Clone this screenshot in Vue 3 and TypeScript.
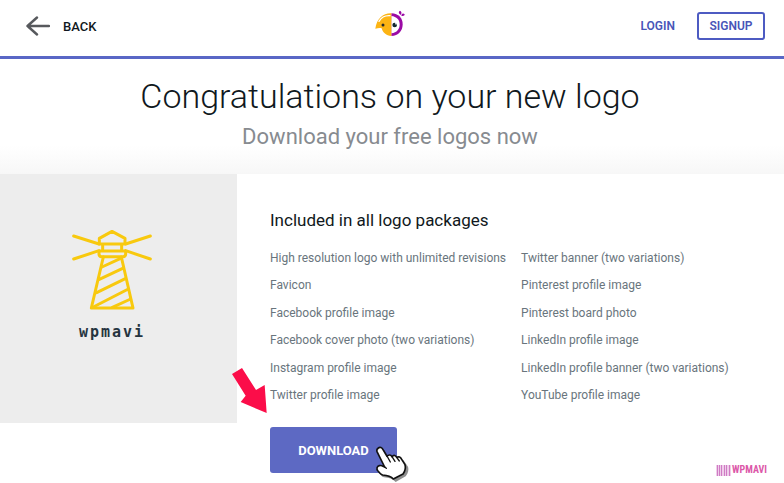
<script setup lang="ts">
const columns: string[][] = [
  [
    'High resolution logo with unlimited revisions',
    'Favicon',
    'Facebook profile image',
    'Facebook cover photo (two variations)',
    'Instagram profile image',
    'Twitter profile image',
  ],
  [
    'Twitter banner (two variations)',
    'Pinterest profile image',
    'Pinterest board photo',
    'LinkedIn profile image',
    'LinkedIn profile banner (two variations)',
    'YouTube profile image',
  ],
]
</script>

<template>
  <div class="page">
    <header class="topbar">
      <a class="back" href="#">
        <svg width="24" height="20" viewBox="0 0 24 20" fill="none" stroke="#57595d" stroke-width="2.400" stroke-linecap="round" stroke-linejoin="round" aria-hidden="true">
          <path d="M23 10H1.5M11 1.5L1.5 10L11 18.5" />
        </svg>
        <span>BACK</span>
      </a>
      <a class="brand" href="#" aria-label="Home">
        <svg width="32" height="32" viewBox="0 0 96 96" aria-hidden="true">
          <path d="M52 10C74 10 86 25 86 43C86 63 73 78 52 78Z" fill="#9b0aa5" />
          <path d="M52 18C68 20 77 29 77 43C77 58 69 68 52 70Z" fill="#fff" />
          <path d="M52 10C28 9 8 26 4 56C13 54 18 54 23 55C26 67 37 78 52 78Z" fill="#fcb414" />
          <path d="M15 34C22 22 34 16 48 17" fill="none" stroke="#fff" stroke-width="4" stroke-linecap="round" />
          <circle cx="27" cy="45" r="4.500" fill="#252a2b" />
          <circle cx="62" cy="45" r="7" fill="#13262f" />
          <circle cx="66" cy="41" r="2.500" fill="#fff" />
          <path d="M80 15C73 10 73 5 78 2C83 4 84 10 80 15ZM82 17C83 10 88 9 92 13C92 17 88 19 82 17Z" fill="#9b0aa5" />
        </svg>
      </a>
      <nav class="account">
        <a class="login" href="#">LOGIN</a>
        <button class="signup" type="button">SIGNUP</button>
      </nav>
    </header>

    <section class="hero">
      <h1>Congratulations on your new logo</h1>
      <p>Download your free logos now</p>
    </section>

    <main class="content">
      <aside class="preview">
        <svg width="80" height="80" viewBox="66 59 240 240" fill="none" stroke="#f8c90e" stroke-width="9" stroke-linecap="round" stroke-linejoin="round" aria-hidden="true">
          <path d="M148 101V84L186 63L225 84V101ZM158 102V121M215 102V121M147 122H227V131Q227 139 219 139H155Q147 139 147 131Z" />
          <path d="M160 140L124 293H249L214 140" />
          <path d="M156 170L212 144M148 207L218 174M140 247L226 205M130 290L235 236M187 291L242 266" />
          <path d="M71 77L147 101M71 146L147 121M301 77L227 101M301 146L227 121" />
        </svg>
        <span class="wordmark">wpmavi</span>
      </aside>

      <section class="details">
        <h2>Included in all logo packages</h2>
        <div class="lists">
          <ul v-for="(items, index) in columns" :key="index">
            <li v-for="item in items" :key="item">{{ item }}</li>
          </ul>
        </div>
        <div class="action">
          <button class="download" type="button">DOWNLOAD</button>
          <svg class="pointer-arrow" width="35" height="45" viewBox="35 25 105 135" aria-hidden="true">
            <path d="M65 25L35 43L76 108L61 127L139 160L133 76L107 91Z" fill="#fb0d49" />
          </svg>
          <svg class="hand" width="34" height="36" viewBox="0 0 102 108" aria-hidden="true">
            <path d="M12 8C17 4 23 7 26 13L38 31C43 28 49 28 53 33C58 29 64 31 67 36C73 32 79 36 83 42L95 59C99 72 92 83 88 88L58 105C49 96 39 92 23 91C16 90 14 84 9 79C3 71 6 64 13 62C20 60 25 63 30 65L9 19C7 14 8 11 12 8Z" fill="#333" opacity="0.55" transform="translate(4 3)" />
            <path d="M10 6C15 2 21 5 24 11L36 31C41 25 47 26 51 32C56 26 62 28 65 34C71 30 77 34 80 40L90 56C94 70 88 78 84 84L55 99C48 91 39 88 23 87C16 85 14 80 9 75C3 68 6 61 13 59C20 57 24 61 29 63L6 17C4 12 6 9 10 6Z" fill="#fff" stroke="#111" stroke-width="5" stroke-linejoin="round" />
            <path d="M36 30L46 48M51 32L60 46M65 34L73 45M29 63L34 67" fill="none" stroke="#111" stroke-width="4" stroke-linecap="round" />
          </svg>
        </div>
      </section>
    </main>

    <div class="watermark">
      <svg width="15" height="11" viewBox="0 0 15 11" aria-hidden="true">
        <path d="M0 0H15V11H0Z" fill="#efcdea" />
        <path d="M1.5 0V11M3.500 0V11M5.500 0V11M8.500 0V11M10.500 0V11M13.500 0V11" stroke="#cf7cc4" stroke-width="1" />
      </svg>
      <span>WPMAVI</span>
    </div>
  </div>
</template>

<style>
body {
  background: #fff;
}
</style>

<style scoped>
.page {
  position: relative;
  min-height: 100vh;
  overflow: hidden;
  color: #101820;
  font-family: Roboto, "Liberation Sans", sans-serif;
}

.topbar {
  display: grid;
  grid-template-columns: 1fr auto 1fr;
  align-items: center;
  height: 59px;
  padding: 0 19px 4px 14px;
  box-sizing: border-box;
  border-bottom: 3px solid #5967c6;
}

.back {
  display: flex;
  align-items: center;
  gap: 13px;
  padding-left: 12px;
  color: #101820;
  font-size: 13px;
  font-weight: 500;
  text-decoration: none;
}

.brand {
  display: flex;
}

.account {
  display: flex;
  align-items: center;
  justify-content: flex-end;
  gap: 22px;
}

.login,
.signup {
  color: #4855b8;
  font-family: inherit;
  font-size: 12px;
  font-weight: 600;
  text-decoration: none;
}

.signup {
  width: 68px;
  height: 28px;
  padding: 0;
  border: 2px solid #4d5bc2;
  border-radius: 3px;
  background: #fff;
}

.hero {
  height: 115px;
  padding: 17px 4px 0 0;
  box-sizing: border-box;
  background: linear-gradient(#fff 75%, #f7f7f7);
  text-align: center;
}

h1 {
  margin: 0;
  font-size: 34px;
  font-weight: 300;
  line-height: 40px;
}

.hero p {
  margin: 7px 0 0;
  color: #878b90;
  font-size: 22px;
  line-height: 28px;
}

.content {
  display: grid;
  grid-template-columns: 237px 1fr;
  align-items: start;
  background: #fff;
}

.preview {
  display: flex;
  flex-direction: column;
  align-items: center;
  height: 249px;
  padding: 56px 13px 0 0;
  box-sizing: border-box;
  background: #ededed;
}

.wordmark {
  margin-top: 12px;
  color: #26343f;
  font-family: "DejaVu Sans Mono", monospace;
  font-size: 15px;
  font-weight: 700;
  line-height: 20px;
  letter-spacing: 2px;
}

.details {
  padding: 35px 33px 0;
}

h2 {
  margin: 0;
  font-size: 17px;
  font-weight: 400;
  line-height: 22px;
}

.lists {
  display: flex;
  gap: 15px;
  margin-top: 17px;
}

ul {
  display: flex;
  flex-direction: column;
  justify-content: space-between;
  height: 157px;
  margin: 0;
  padding: 0;
  list-style: none;
}

li {
  color: #69757d;
  font-size: 12px;
  line-height: 20px;
  white-space: nowrap;
}

.action {
  position: relative;
  width: 127px;
  margin-top: 22px;
}

.download {
  display: block;
  width: 100%;
  height: 46px;
  padding: 0;
  border: 0;
  border-radius: 3px;
  background: #5d69c3;
  color: #fff;
  font-family: inherit;
  font-size: 13px;
  font-weight: 700;
}

.pointer-arrow {
  position: absolute;
  top: -59px;
  left: -38px;
}

.hand {
  position: absolute;
  top: 19px;
  left: 105px;
}

.watermark {
  position: absolute;
  right: 17px;
  bottom: 7px;
  display: flex;
  align-items: center;
  gap: 1px;
  color: #dc58a9;
  font-family: "Liberation Sans Narrow", "Roboto Condensed", Roboto, sans-serif;
  font-size: 10px;
  font-weight: 700;
  line-height: 12px;
}
</style>
